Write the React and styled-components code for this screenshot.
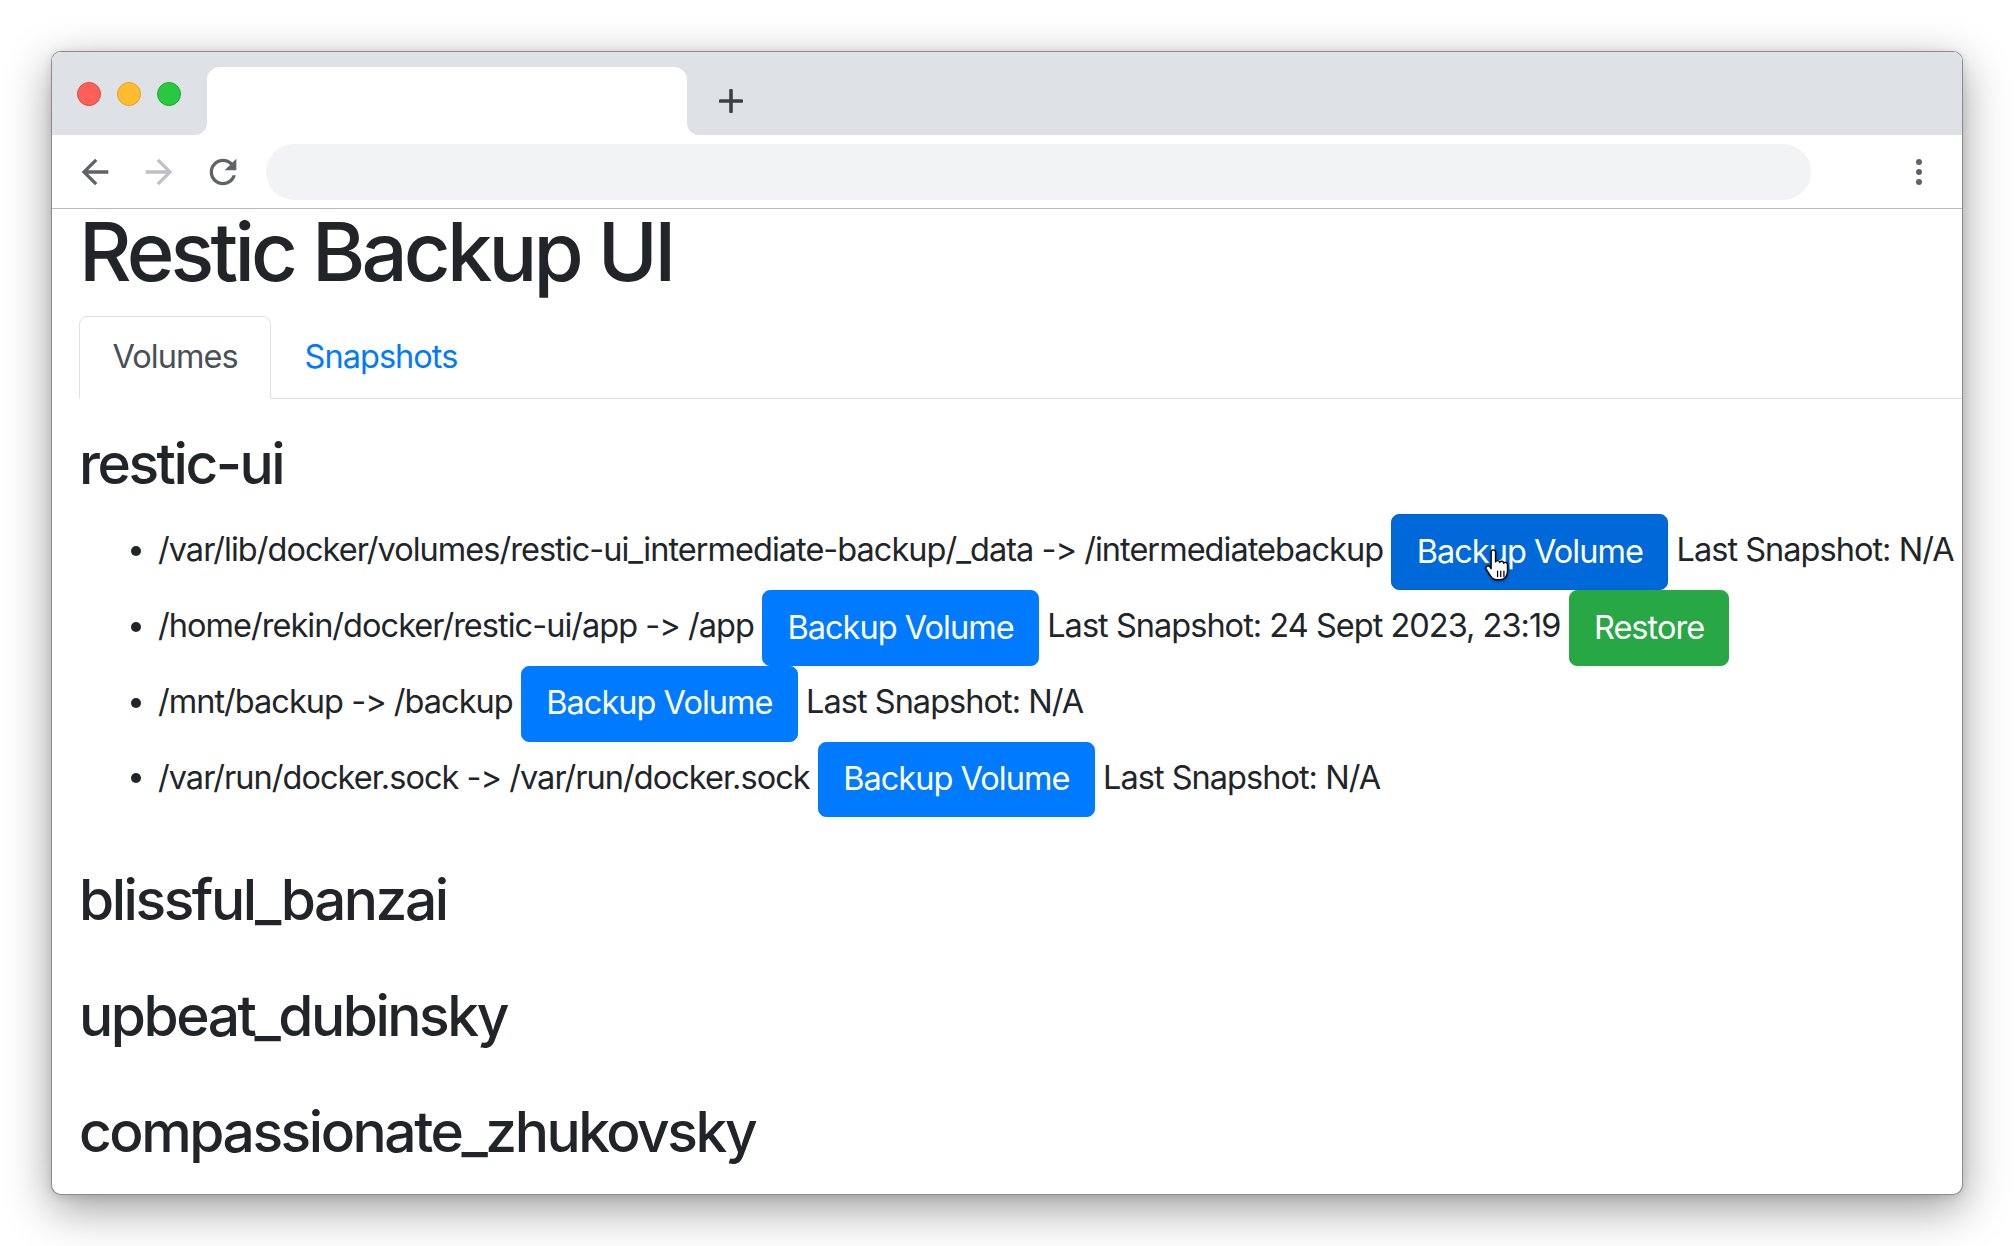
import React from "react";
import styled, { createGlobalStyle, css } from "styled-components";

const R = 32.5;

const GlobalStyle = createGlobalStyle`
  html, body {
    margin: 0;
    padding: 0;
    background: #ffffff;
  }
  body {
    font-family: Inter, "Liberation Sans", Arial, sans-serif;
    font-variant-ligatures: none;
    font-feature-settings: "calt" 0, "liga" 0;
    color: #212529;
  }
  * { box-sizing: border-box; }
`;

const Stage = styled.div`
  width: 2014px;
  height: 1246px;
  padding: 51px;
  background: #ffffff;
`;

const Window = styled.div`
  width: 1912px;
  height: 1144px;
  border: 1px solid rgba(0, 0, 0, 0.45);
  border-radius: 10px;
  overflow: hidden;
  background: #ffffff;
  display: flex;
  flex-direction: column;
  box-shadow: 0 14px 46px rgba(0, 0, 0, 0.38), 0 2px 10px rgba(0, 0, 0, 0.12);
`;

const TabStrip = styled.div`
  height: 83px;
  flex-shrink: 0;
  display: flex;
  background: #ffffff;
`;

const LeftCap = styled.div`
  width: 155px;
  background: #dee1e6;
  border-bottom-right-radius: 12px;
  display: flex;
  align-items: center;
  gap: 16px;
  padding-left: 25px;
`;

const Light = styled.span`
  width: 24px;
  height: 24px;
  border-radius: 50%;
  background: ${(p) => p.$fill};
  border: 1px solid ${(p) => p.$edge};
`;

const TabSlot = styled.div`
  width: 480px;
  background: #dee1e6;
  padding-top: 15px;
  display: flex;
`;

const ActiveTab = styled.div`
  flex: 1;
  background: #ffffff;
  border-radius: 13px 13px 0 0;
`;

const RightCap = styled.div`
  flex: 1;
  background: #dee1e6;
  border-bottom-left-radius: 12px;
  padding-top: 15px;
  padding-left: 32px;
  display: flex;
  align-items: center;
`;

const Toolbar = styled.div`
  height: 74px;
  flex-shrink: 0;
  border-bottom: 1px solid #bababa;
  display: flex;
  align-items: center;
  padding: 0 23px;
  background: #ffffff;
`;

const ToolIcon = styled.div`
  width: 40px;
  height: 40px;
  display: flex;
  align-items: center;
  justify-content: center;
  color: ${(p) => (p.$muted ? "#bdc1c6" : "#5f6368")};
  margin-right: ${(p) => p.$gap ?? 24}px;
`;

const AddressBar = styled.div`
  flex: 1;
  height: 56px;
  border-radius: 28px;
  background: #f1f3f4;
`;

const MenuIcon = styled.div`
  width: 40px;
  height: 40px;
  margin-left: 88px;
  display: flex;
  align-items: center;
  justify-content: center;
  color: #5f6368;
`;

const Viewport = styled.div`
  flex: 1;
  overflow: hidden;
`;

const Page = styled.div`
  padding-left: 27px;
`;

const Title = styled.h1`
  margin: 0 0 22px;
  font-size: ${R * 2.5}px;
  font-weight: 500;
  line-height: 85px;
  letter-spacing: -0.047em;
  color: #212529;
`;

const Nav = styled.div`
  display: flex;
  border-bottom: 1px solid #dee2e6;
`;

const NavItem = styled.a`
  display: block;
  margin-bottom: -1px;
  padding: ${R * 0.5}px ${R}px;
  font-size: ${R}px;
  line-height: 1.5;
  letter-spacing: -0.03em;
  border: 1px solid transparent;
  border-top-left-radius: ${R * 0.25}px;
  border-top-right-radius: ${R * 0.25}px;
  text-decoration: none;
  color: #007bff;
  ${(p) =>
    p.$active &&
    css`
      color: #495057;
      background: #ffffff;
      border-color: #dee2e6 #dee2e6 #ffffff;
    `}
`;

const Content = styled.div`
  padding-top: 30.5px;
  display: flex;
  flex-direction: column;
`;

const VolumeBlock = styled.section`
  display: flex;
  flex-direction: column;
  padding-bottom: ${(p) => (p.$empty ? 31.5 : R)}px;
`;

const VolumeName = styled.h3`
  margin: 0 0 ${R * 0.5}px;
  font-size: ${R * 1.75}px;
  font-weight: 500;
  line-height: 1.2;
  letter-spacing: -0.043em;
  color: #212529;
`;

const MountList = styled.ul`
  margin: 0 0 ${R * 0.5}px;
  padding-left: 79px;
  font-size: ${R}px;
  line-height: 1.5;
  letter-spacing: -0.03em;
`;

const Mount = styled.li`
  white-space: nowrap;
`;

const Btn = styled.span`
  position: relative;
  display: inline-block;
  vertical-align: middle;
  padding: 12.5px ${R * 0.75}px;
  border: 1px solid ${(p) => p.$edge};
  border-radius: ${R * 0.25}px;
  background: ${(p) => p.$fill};
  color: #ffffff;
  font-size: ${R}px;
  line-height: 1.5;
  font-weight: 400;
  letter-spacing: -0.03em;
`;

const CursorWrap = styled.span`
  position: absolute;
  left: 89px;
  top: 33px;
  width: 34px;
  height: 38px;
  pointer-events: none;
`;

const palette = {
  primary: { $fill: "#007bff", $edge: "#007bff" },
  hover: { $fill: "#0069d9", $edge: "#0062cc" },
  success: { $fill: "#28a745", $edge: "#28a745" },
};

const HandCursor = () => (
  <CursorWrap>
    <svg width="34" height="38" viewBox="0 0 32 36">
      <defs>
        <filter id="cshadow" x="-30%" y="-30%" width="160%" height="160%">
          <feDropShadow dx="0.6" dy="1.2" stdDeviation="0.9" floodColor="#000" floodOpacity="0.45" />
        </filter>
      </defs>
      <path
        filter="url(#cshadow)"
        d="M9.5 4c0-1.3 0.9-2.2 2.1-2.2s2.1 0.9 2.1 2.2v9.2c0.3-0.8 1-1.3 1.9-1.3 1.1 0 1.9 0.8 2 1.8 0.3-0.7 1-1.1 1.8-1.1 1.1 0 1.9 0.8 2 1.8 0.3-0.5 0.9-0.8 1.6-0.8 1.1 0 2 0.9 2 2.1v6.1c0 4.4-2.6 8.2-7 8.2h-3.4c-2.6 0-4.2-1.3-5.6-3.4l-4.2-6.6c-0.6-1-0.3-2.3 0.7-2.8 1-0.6 2.2-0.2 2.8 0.7l1.2 1.7V4z"
        fill="#ffffff"
        stroke="#000000"
        strokeWidth="1.3"
        strokeLinejoin="round"
      />
      <path d="M15.6 22v5M18.6 22v5M21.6 22v5" stroke="#000" strokeWidth="1.2" strokeLinecap="round" />
    </svg>
  </CursorWrap>
);

const volumes = [
  {
    name: "restic-ui",
    mounts: [
      {
        path: "/var/lib/docker/volumes/restic-ui_intermediate-backup/_data -> /intermediatebackup",
        snapshot: "N/A",
        hover: true,
      },
      {
        path: "/home/rekin/docker/restic-ui/app -> /app",
        snapshot: "24 Sept 2023, 23:19",
        restore: true,
      },
      { path: "/mnt/backup -> /backup", snapshot: "N/A" },
      { path: "/var/run/docker.sock -> /var/run/docker.sock", snapshot: "N/A" },
    ],
  },
  { name: "blissful_banzai", mounts: [] },
  { name: "upbeat_dubinsky", mounts: [] },
  { name: "compassionate_zhukovsky", mounts: [] },
];

const ArrowBack = () => (
  <svg width="40" height="40" viewBox="0 0 24 24" fill="currentColor">
    <path d="M20 11H7.83l5.59-5.59L12 4l-8 8 8 8 1.41-1.41L7.83 13H20v-2z" />
  </svg>
);

const ArrowForward = () => (
  <svg width="40" height="40" viewBox="0 0 24 24" fill="currentColor">
    <path d="M12 4l-1.41 1.41L16.17 11H4v2h12.17l-5.58 5.59L12 20l8-8z" />
  </svg>
);

const Reload = () => (
  <svg width="40" height="40" viewBox="0 0 24 24" fill="currentColor">
    <path d="M17.65 6.35C16.2 4.9 14.21 4 12 4c-4.42 0-7.99 3.58-7.99 8s3.57 8 7.99 8c3.73 0 6.84-2.55 7.73-6h-2.08c-.82 2.33-3.04 4-5.65 4-3.31 0-6-2.69-6-6s2.69-6 6-6c1.66 0 3.14.69 4.22 1.78L13 11h7V4l-2.35 2.35z" />
  </svg>
);

const MoreVert = () => (
  <svg width="40" height="40" viewBox="0 0 24 24" fill="currentColor">
    <circle cx="12" cy="6" r="1.8" />
    <circle cx="12" cy="12" r="1.8" />
    <circle cx="12" cy="18" r="1.8" />
  </svg>
);

const PlusIcon = () => (
  <svg width="24" height="24" viewBox="0 0 24 24">
    <path d="M12 1.5v21M1.5 12h21" stroke="#3c4043" strokeWidth="3.6" strokeLinecap="round" />
  </svg>
);

export default function App() {
  return (
    <>
      <GlobalStyle />
      <Stage>
        <Window>
          <TabStrip>
            <LeftCap>
              <Light $fill="#ff5f57" $edge="#e2463f" />
              <Light $fill="#febc2e" $edge="#e1a325" />
              <Light $fill="#28c840" $edge="#1dad2b" />
            </LeftCap>
            <TabSlot>
              <ActiveTab />
            </TabSlot>
            <RightCap>
              <PlusIcon />
            </RightCap>
          </TabStrip>
          <Toolbar>
            <ToolIcon>
              <ArrowBack />
            </ToolIcon>
            <ToolIcon $muted>
              <ArrowForward />
            </ToolIcon>
            <ToolIcon $gap={23}>
              <Reload />
            </ToolIcon>
            <AddressBar />
            <MenuIcon>
              <MoreVert />
            </MenuIcon>
          </Toolbar>
          <Viewport>
            <Page>
              <Title>Restic Backup UI</Title>
              <Nav>
                <NavItem $active>Volumes</NavItem>
                <NavItem>Snapshots</NavItem>
              </Nav>
              <Content>
                {volumes.map((v) => (
                  <VolumeBlock key={v.name} $empty={v.mounts.length === 0}>
                    <VolumeName>{v.name}</VolumeName>
                    {v.mounts.length > 0 && (
                      <MountList>
                        {v.mounts.map((m) => (
                          <Mount key={m.path}>
                            {m.path}{" "}
                            <Btn {...(m.hover ? palette.hover : palette.primary)}>
                              Backup Volume
                              {m.hover && <HandCursor />}
                            </Btn>{" "}
                            Last Snapshot: {m.snapshot}
                            {m.restore && (
                              <>
                                {" "}
                                <Btn {...palette.success}>Restore</Btn>
                              </>
                            )}
                          </Mount>
                        ))}
                      </MountList>
                    )}
                  </VolumeBlock>
                ))}
              </Content>
            </Page>
          </Viewport>
        </Window>
      </Stage>
    </>
  );
}
